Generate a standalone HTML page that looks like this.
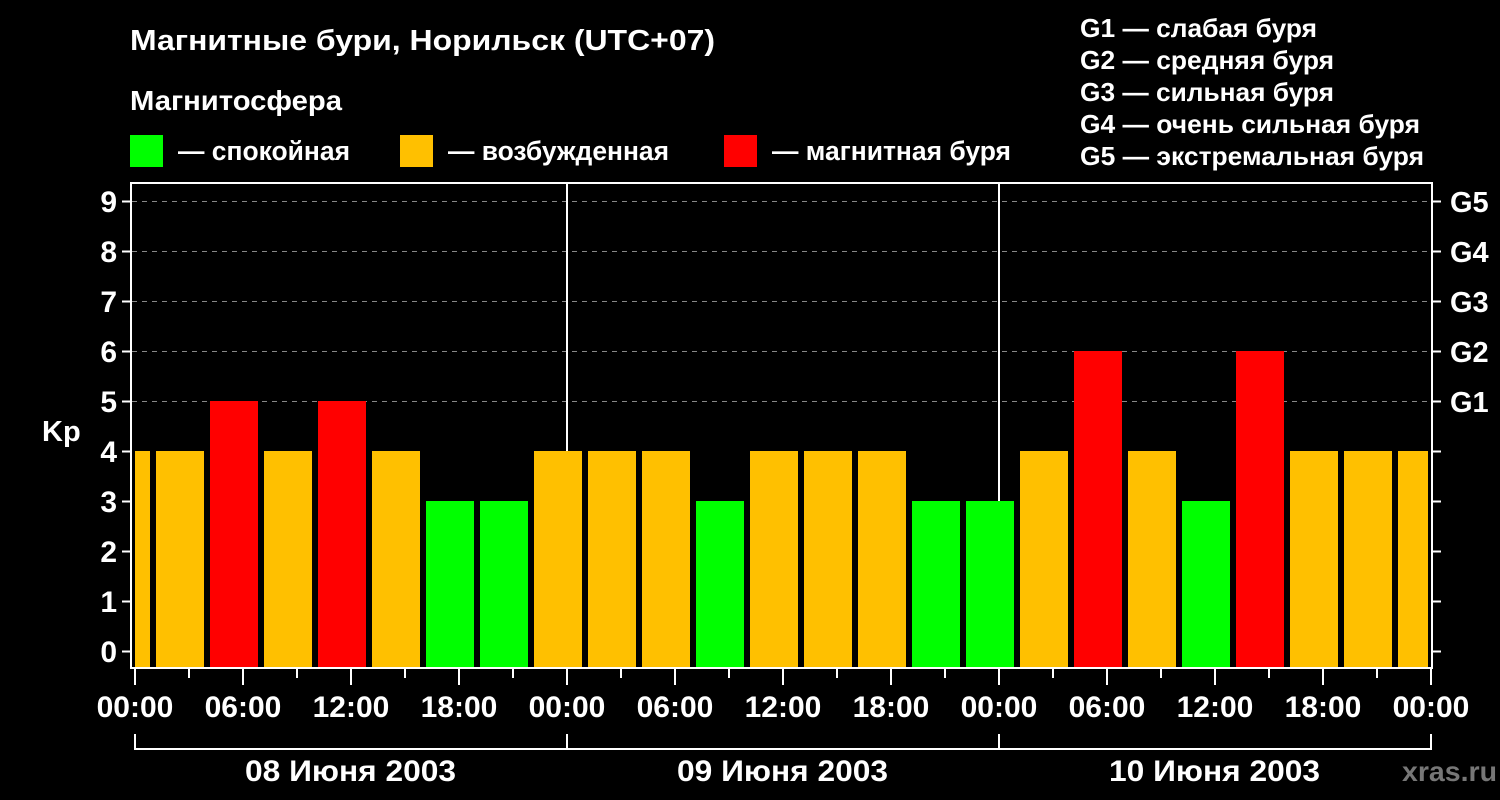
<!DOCTYPE html>
<html><head><meta charset="utf-8"><style>
html,body{margin:0;padding:0;background:#000;}
svg{display:block;}
text{font-family:"Liberation Sans",sans-serif;font-weight:bold;fill:#fff;}
</style></head><body>
<svg width="1500" height="800" xmlns="http://www.w3.org/2000/svg">
<rect width="1500" height="800" fill="#000"/>
<text x="130" y="50" font-size="29" textLength="585" lengthAdjust="spacingAndGlyphs">Магнитные бури, Норильск (UTC+07)</text>
<text x="130" y="110" font-size="28" textLength="212" lengthAdjust="spacingAndGlyphs">Магнитосфера</text>
<rect x="130" y="135" width="33" height="32" fill="#00ff00"/>
<text x="178" y="160" font-size="27" textLength="172" lengthAdjust="spacingAndGlyphs">— спокойная</text>
<rect x="400" y="135" width="33" height="32" fill="#ffc000"/>
<text x="448" y="160" font-size="27" textLength="221" lengthAdjust="spacingAndGlyphs">— возбужденная</text>
<rect x="724" y="135" width="33" height="32" fill="#ff0000"/>
<text x="772" y="160" font-size="27" textLength="239" lengthAdjust="spacingAndGlyphs">— магнитная буря</text>
<g font-size="26">
<text x="1080" y="37" textLength="237" lengthAdjust="spacingAndGlyphs">G1 — слабая буря</text>
<text x="1080" y="69" textLength="254" lengthAdjust="spacingAndGlyphs">G2 — средняя буря</text>
<text x="1080" y="101" textLength="254" lengthAdjust="spacingAndGlyphs">G3 — сильная буря</text>
<text x="1080" y="133" textLength="340" lengthAdjust="spacingAndGlyphs">G4 — очень сильная буря</text>
<text x="1080" y="165" textLength="344" lengthAdjust="spacingAndGlyphs">G5 — экстремальная буря</text>
</g>
<g stroke="#888" stroke-width="1" stroke-dasharray="5,5">
<line x1="132" y1="201.5" x2="1431" y2="201.5"/>
<line x1="132" y1="251.5" x2="1431" y2="251.5"/>
<line x1="132" y1="301.5" x2="1431" y2="301.5"/>
<line x1="132" y1="351.5" x2="1431" y2="351.5"/>
<line x1="132" y1="401.5" x2="1431" y2="401.5"/>
</g>
<g>
<rect x="135" y="451" width="15" height="217" fill="#ffc000"/>
<rect x="156" y="451" width="48" height="217" fill="#ffc000"/>
<rect x="210" y="401" width="48" height="267" fill="#ff0000"/>
<rect x="264" y="451" width="48" height="217" fill="#ffc000"/>
<rect x="318" y="401" width="48" height="267" fill="#ff0000"/>
<rect x="372" y="451" width="48" height="217" fill="#ffc000"/>
<rect x="426" y="501" width="48" height="167" fill="#00ff00"/>
<rect x="480" y="501" width="48" height="167" fill="#00ff00"/>
<rect x="534" y="451" width="48" height="217" fill="#ffc000"/>
<rect x="588" y="451" width="48" height="217" fill="#ffc000"/>
<rect x="642" y="451" width="48" height="217" fill="#ffc000"/>
<rect x="696" y="501" width="48" height="167" fill="#00ff00"/>
<rect x="750" y="451" width="48" height="217" fill="#ffc000"/>
<rect x="804" y="451" width="48" height="217" fill="#ffc000"/>
<rect x="858" y="451" width="48" height="217" fill="#ffc000"/>
<rect x="912" y="501" width="48" height="167" fill="#00ff00"/>
<rect x="966" y="501" width="48" height="167" fill="#00ff00"/>
<rect x="1020" y="451" width="48" height="217" fill="#ffc000"/>
<rect x="1074" y="351" width="48" height="317" fill="#ff0000"/>
<rect x="1128" y="451" width="48" height="217" fill="#ffc000"/>
<rect x="1182" y="501" width="48" height="167" fill="#00ff00"/>
<rect x="1236" y="351" width="48" height="317" fill="#ff0000"/>
<rect x="1290" y="451" width="48" height="217" fill="#ffc000"/>
<rect x="1344" y="451" width="48" height="217" fill="#ffc000"/>
<rect x="1398" y="451" width="30" height="217" fill="#ffc000"/>
</g>
<g stroke="#fff" stroke-width="2" fill="none">
<rect x="131" y="183" width="1301" height="485"/>
<line x1="567" y1="183" x2="567" y2="451"/>
<line x1="999" y1="183" x2="999" y2="501"/>
</g>
<g stroke="#fff" stroke-width="2">
<line x1="122" y1="201.5" x2="131" y2="201.5"/><line x1="1432" y1="201.5" x2="1441" y2="201.5"/>
<line x1="122" y1="251.5" x2="131" y2="251.5"/><line x1="1432" y1="251.5" x2="1441" y2="251.5"/>
<line x1="122" y1="301.5" x2="131" y2="301.5"/><line x1="1432" y1="301.5" x2="1441" y2="301.5"/>
<line x1="122" y1="351.5" x2="131" y2="351.5"/><line x1="1432" y1="351.5" x2="1441" y2="351.5"/>
<line x1="122" y1="401.5" x2="131" y2="401.5"/><line x1="1432" y1="401.5" x2="1441" y2="401.5"/>
<line x1="122" y1="451.5" x2="131" y2="451.5"/><line x1="1432" y1="451.5" x2="1441" y2="451.5"/>
<line x1="122" y1="501.5" x2="131" y2="501.5"/><line x1="1432" y1="501.5" x2="1441" y2="501.5"/>
<line x1="122" y1="551.5" x2="131" y2="551.5"/><line x1="1432" y1="551.5" x2="1441" y2="551.5"/>
<line x1="122" y1="601.5" x2="131" y2="601.5"/><line x1="1432" y1="601.5" x2="1441" y2="601.5"/>
<line x1="122" y1="651.5" x2="131" y2="651.5"/><line x1="1432" y1="651.5" x2="1441" y2="651.5"/>
</g>
<g stroke="#fff" stroke-width="2">
<line x1="135" y1="668" x2="135" y2="685"/><line x1="189" y1="668" x2="189" y2="678"/>
<line x1="243" y1="668" x2="243" y2="685"/><line x1="297" y1="668" x2="297" y2="678"/>
<line x1="351" y1="668" x2="351" y2="685"/><line x1="405" y1="668" x2="405" y2="678"/>
<line x1="459" y1="668" x2="459" y2="685"/><line x1="513" y1="668" x2="513" y2="678"/>
<line x1="567" y1="668" x2="567" y2="685"/><line x1="621" y1="668" x2="621" y2="678"/>
<line x1="675" y1="668" x2="675" y2="685"/><line x1="729" y1="668" x2="729" y2="678"/>
<line x1="783" y1="668" x2="783" y2="685"/><line x1="837" y1="668" x2="837" y2="678"/>
<line x1="891" y1="668" x2="891" y2="685"/><line x1="945" y1="668" x2="945" y2="678"/>
<line x1="999" y1="668" x2="999" y2="685"/><line x1="1053" y1="668" x2="1053" y2="678"/>
<line x1="1107" y1="668" x2="1107" y2="685"/><line x1="1161" y1="668" x2="1161" y2="678"/>
<line x1="1215" y1="668" x2="1215" y2="685"/><line x1="1269" y1="668" x2="1269" y2="678"/>
<line x1="1323" y1="668" x2="1323" y2="685"/><line x1="1377" y1="668" x2="1377" y2="678"/>
<line x1="1431" y1="668" x2="1431" y2="685"/>
</g>
<g font-size="30" text-anchor="end">
<text x="117" y="212">9</text><text x="117" y="262">8</text><text x="117" y="312">7</text>
<text x="117" y="362">6</text><text x="117" y="412">5</text><text x="117" y="462">4</text>
<text x="117" y="512">3</text><text x="117" y="562">2</text><text x="117" y="612">1</text>
<text x="117" y="662">0</text>
</g>
<text x="42" y="441" font-size="29">Kp</text>
<g font-size="29">
<text x="1450" y="212">G5</text><text x="1450" y="262">G4</text><text x="1450" y="312">G3</text>
<text x="1450" y="362">G2</text><text x="1450" y="412">G1</text>
</g>
<g font-size="30" text-anchor="middle">
<text x="135" y="717">00:00</text><text x="243" y="717">06:00</text><text x="351" y="717">12:00</text><text x="459" y="717">18:00</text>
<text x="567" y="717">00:00</text><text x="675" y="717">06:00</text><text x="783" y="717">12:00</text><text x="891" y="717">18:00</text>
<text x="999" y="717">00:00</text><text x="1107" y="717">06:00</text><text x="1215" y="717">12:00</text><text x="1323" y="717">18:00</text>
<text x="1431" y="717">00:00</text>
</g>
<g font-size="30">
<text x="245" y="781" textLength="211" lengthAdjust="spacingAndGlyphs">08 Июня 2003</text>
<text x="677" y="781" textLength="211" lengthAdjust="spacingAndGlyphs">09 Июня 2003</text>
<text x="1109" y="781" textLength="211" lengthAdjust="spacingAndGlyphs">10 Июня 2003</text>
</g>
<g stroke="#fff" stroke-width="2" fill="none">
<polyline points="135,734 135,749 1431,749 1431,734"/>
<line x1="567" y1="734" x2="567" y2="749"/>
<line x1="999" y1="734" x2="999" y2="749"/>
</g>
<text x="1402" y="781" font-size="28" style="fill:#777" textLength="95" lengthAdjust="spacingAndGlyphs">xras.ru</text>
</svg>
</body></html>
